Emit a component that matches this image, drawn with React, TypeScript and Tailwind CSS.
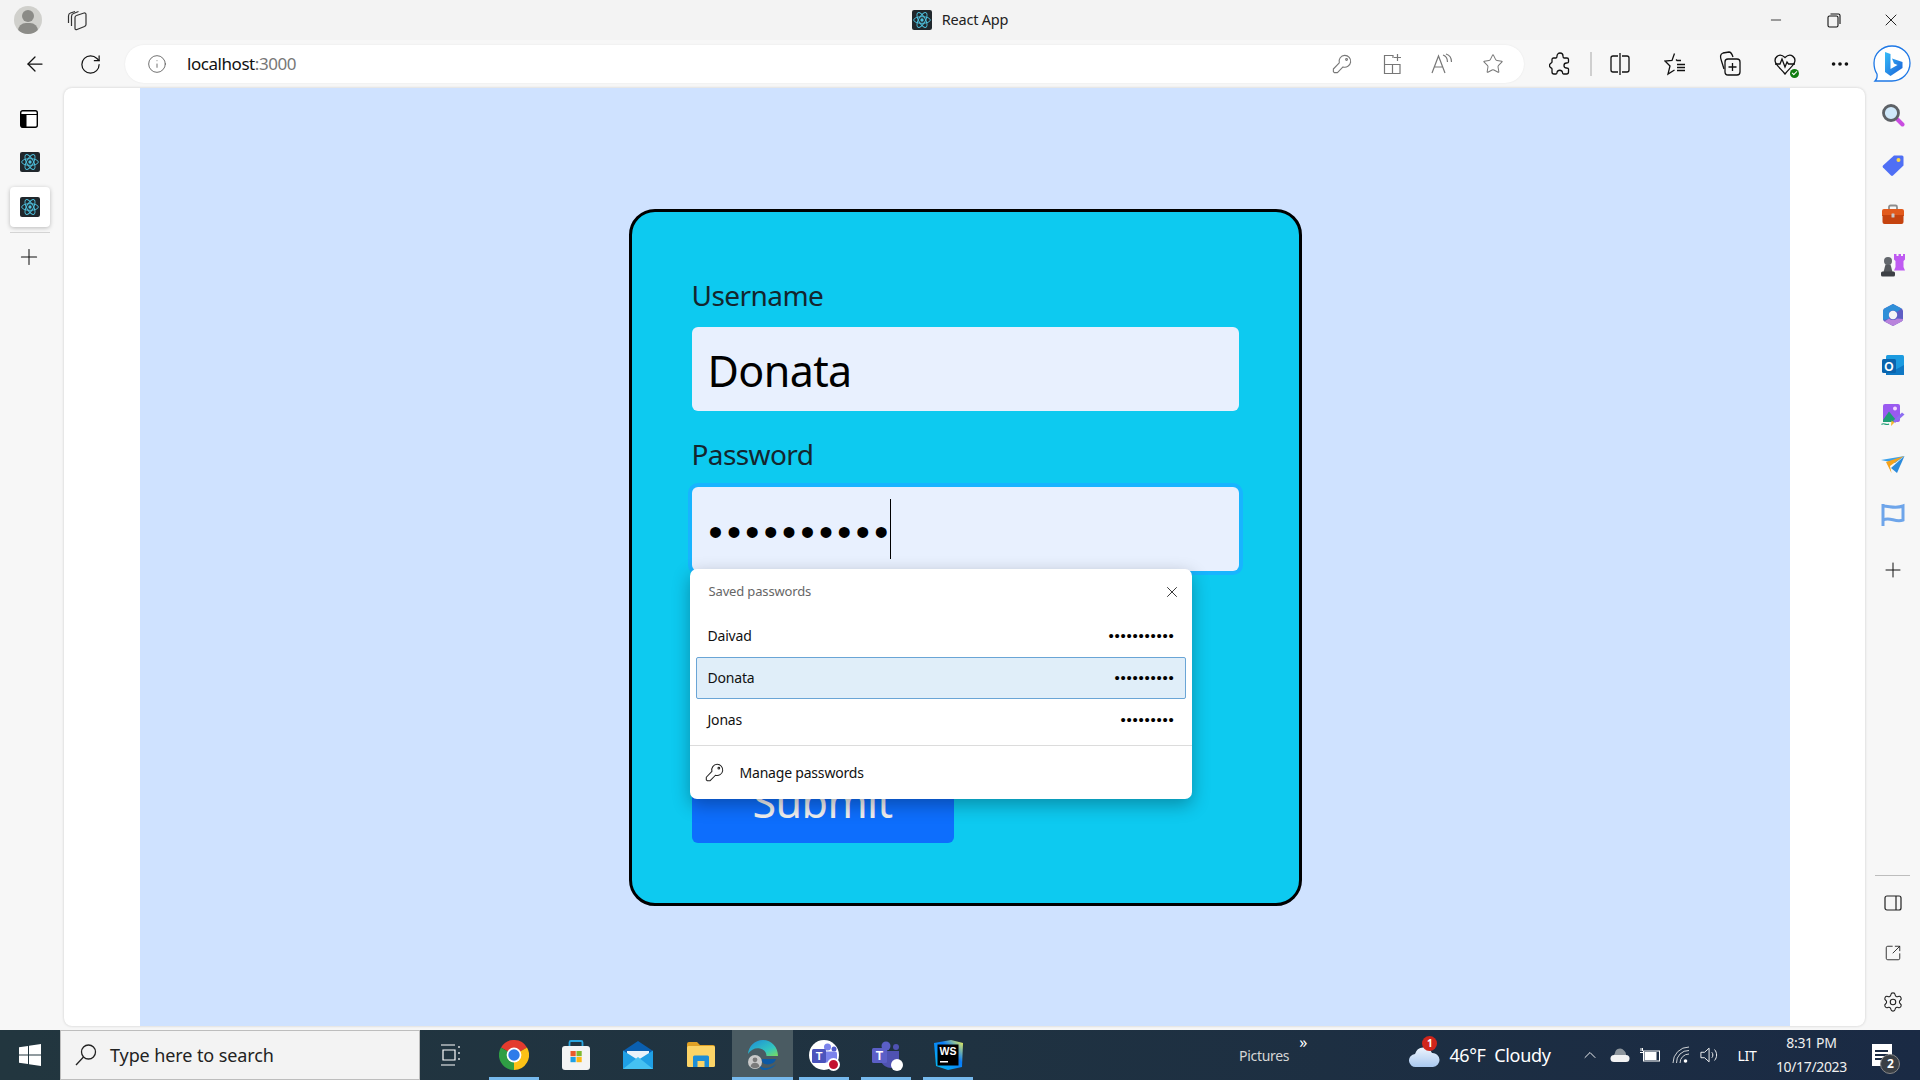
import type { ReactNode } from "react";
import {
  ArrowLeft,
  ChevronUp,
  Ellipsis,
  Info,
  Minus,
  Plus,
  RotateCw,
  Settings,
  SquareArrowOutUpRight,
  Star,
  X,
} from "lucide-react";

const ui = "font-['Noto_Sans','Open_Sans',sans-serif]";

function ReactLogo({ size = 20 }: { size?: number }) {
  return (
    <svg width={size} height={size} viewBox="0 0 24 24">
      <rect width="24" height="24" rx="2.5" fill="#20272c" />
      <g fill="none" stroke="#4fc3e0" strokeWidth="1.1">
        <ellipse cx="12" cy="12" rx="10" ry="4" />
        <ellipse cx="12" cy="12" rx="10" ry="4" transform="rotate(60 12 12)" />
        <ellipse cx="12" cy="12" rx="10" ry="4" transform="rotate(120 12 12)" />
      </g>
      <circle cx="12" cy="12" r="2" fill="#4fc3e0" />
    </svg>
  );
}

function KeyIcon({ color, size = 20 }: { color: string; size?: number }) {
  return (
    <svg width={size} height={size} viewBox="0 0 22 22" fill="none" stroke={color} strokeWidth="1.2" strokeLinejoin="round">
      <path d="M14 1.500a6.500 6.500 0 1 1-1.900 12.700L6 20.500H2.500L1.500 19.500V16.500L8 9.700A6.500 6.500 0 0 1 14 1.500Z" />
      <circle cx="16" cy="6" r="1" />
    </svg>
  );
}

function ChromeIcon() {
  return (
    <svg width="30" height="30" viewBox="0 0 30 30">
      <path d="M15 15L2 7.5A15 15 0 0 1 28 7.5Z" fill="#e33b2e" />
      <path d="M15 15L28 7.5A15 15 0 0 1 15 30Z" fill="#fbc116" />
      <path d="M15 15L15 30A15 15 0 0 1 2 7.5Z" fill="#2f9e44" />
      <circle cx="15" cy="15" r="7.4" fill="#fff" />
      <circle cx="15" cy="15" r="5.7" fill="#2f7bea" />
    </svg>
  );
}

function StoreIcon() {
  return (
    <svg width="30" height="32" viewBox="0 0 30 32">
      <path d="M8.5 9V3.5a1.5 1.5 0 0 1 1.5-1.5h10a1.5 1.5 0 0 1 1.5 1.5V9" fill="none" stroke="#2aa5df" strokeWidth="1.8" />
      <rect x="1" y="7" width="28" height="24" rx="3" fill="#f4f4f4" />
      <rect x="9.5" y="12" width="5.2" height="5.2" fill="#ea5a2c" />
      <rect x="15.5" y="12" width="5.2" height="5.2" fill="#7fb92f" />
      <rect x="9.5" y="18" width="5.2" height="5.2" fill="#1ea0e6" />
      <rect x="15.5" y="18" width="5.2" height="5.2" fill="#fdb813" />
    </svg>
  );
}

function MailIcon() {
  return (
    <svg width="30" height="28" viewBox="0 0 30 28">
      <path d="M0 10L15 0L30 10V12H0Z" fill="#0a5fb0" />
      <path d="M4 10H26V17L15 22L4 17Z" fill="#e9f2fa" />
      <path d="M0 9.5L15 19L30 9.5V28H0Z" fill="#1f9fe5" />
      <path d="M0 28L15 16L30 28Z" fill="#45c1f2" />
    </svg>
  );
}

function FolderIcon() {
  return (
    <svg width="28" height="26" viewBox="0 0 28 26">
      <path d="M0 2a2 2 0 0 1 2-2h8l3 3h13a2 2 0 0 1 2 2v4H0Z" fill="#e0a125" />
      <rect y="4" width="28" height="21" rx="1.5" fill="#fcd467" />
      <path d="M6 25V15a1.5 1.5 0 0 1 1.5-1.5h13A1.5 1.5 0 0 1 22 15v10h-4.5v-6h-7v6Z" fill="#1d8ed8" />
    </svg>
  );
}

function EdgeIcon() {
  return (
    <svg width="30" height="30" viewBox="0 0 30 30">
      <defs>
        <linearGradient id="edgeG" x1="0" y1="0" x2="1" y2="1">
          <stop offset="0" stopColor="#1c8bd8" />
          <stop offset="0.65" stopColor="#33c6c0" />
          <stop offset="1" stopColor="#7edb5a" />
        </linearGradient>
      </defs>
      <path d="M15 0C6.5 0 .5 6.5 0 14c3-5 8-6.5 12-5.5 5 1.2 6.5 4.5 6.5 7.5H30C30 7 23.5 0 15 0Z" fill="url(#edgeG)" />
      <path d="M11 24c2 5 10 5.5 17 0-2.500 3.500-7 6-12 6-2 0-4-.8-5-6Z" fill="#0d5ea8" />
      <path d="M14 19h14c-1 4-7 6.500-11 5-2.500-.9-3.500-3-3-5Z" fill="#0c59a4" />
      <circle cx="7" cy="22" r="7" fill="#c9c9c9" />
      <circle cx="7" cy="19.800" r="2.400" fill="#7a7a7a" />
      <path d="M2.500 26.500c.6-3 2.500-3.800 4.500-3.800s3.900.8 4.500 3.800A7 7 0 0 1 2.500 26.500Z" fill="#7a7a7a" />
    </svg>
  );
}

function TeamsWork() {
  return (
    <div className="relative h-[30px] w-[30px] rounded-full bg-white">
      <svg width="30" height="30" viewBox="0 0 30 30" className="absolute inset-0">
        <circle cx="18.500" cy="7" r="3.500" fill="#7b83eb" />
        <circle cx="25" cy="9" r="2.500" fill="#5059c9" />
        <rect x="14" y="11.500" width="14" height="11" rx="2" fill="#7b83eb" />
        <rect x="3" y="9" width="14" height="14" rx="1.500" fill="#4b53bc" />
        <text x="10" y="20" textAnchor="middle" fontSize="11" fontWeight="700" fill="#fff" fontFamily="Liberation Sans, sans-serif">T</text>
      </svg>
      <span className="absolute right-[-1px] bottom-[-1px] h-[13px] w-[13px] rounded-full border-2 border-white bg-[#c4122f]" />
    </div>
  );
}

function TeamsChat() {
  return (
    <div className="relative h-[30px] w-[30px]">
      <svg width="30" height="30" viewBox="0 0 30 30" className="absolute inset-0">
        <circle cx="15" cy="6" r="4.500" fill="#5b5fc7" />
        <circle cx="25" cy="7" r="3" fill="#4f52b2" />
        <path d="M9 11h19v9c0 5-4 8-8 8s-9-3-11-8Z" fill="#4f52b2" />
        <rect x="1" y="8" width="15" height="15" rx="1.500" fill="#5b5fc7" />
        <text x="8.500" y="20" textAnchor="middle" fontSize="12" fontWeight="700" fill="#fff" fontFamily="Liberation Sans, sans-serif">T</text>
      </svg>
      <span className="absolute right-[-2px] bottom-[-1px] h-[12px] w-[12px] rounded-full bg-white" />
    </div>
  );
}

function WebStormIcon() {
  return (
    <svg width="30" height="30" viewBox="0 0 30 30">
      <defs>
        <linearGradient id="wsG" x1="0" y1="1" x2="1" y2="0">
          <stop offset="0" stopColor="#07c3f2" />
          <stop offset="0.6" stopColor="#087cfa" />
          <stop offset="1" stopColor="#fcf84a" />
        </linearGradient>
      </defs>
      <path d="M1 3L18 0L30 3L29 27L15 30L3 26Z" fill="url(#wsG)" />
      <rect x="4.500" y="4.500" width="21" height="21" fill="#000" />
      <text x="15" y="15" textAnchor="middle" fontSize="10.500" fontWeight="700" fill="#fff" fontFamily="Liberation Sans, sans-serif">WS</text>
      <rect x="7" y="21" width="8" height="1.500" fill="#fff" />
    </svg>
  );
}

function BingIcon() {
  return (
    <svg width="42" height="42" viewBox="0 0 40 40">
      <defs>
        <linearGradient id="bingG" x1="0" y1="0" x2="1" y2="1">
          <stop offset="0" stopColor="#37bdf8" />
          <stop offset="1" stopColor="#1a5fd8" />
        </linearGradient>
      </defs>
      <path d="M20 2C30 2 38 9.500 38 19C38 29 30 37 20 37H3C5 35 5.500 33 5 30C3 27 2 23 2 19C2 9.500 10 2 20 2Z" fill="#fff" stroke="#1e78e6" strokeWidth="1.300" />
      <path d="M13 8L18.500 10V25L25.500 21L22 19.500L20 14.500L30.500 18V24L18.500 32L13 28Z" fill="url(#bingG)" />
    </svg>
  );
}

function SideIcon({ name }: { name: string }) {
  if (name === "search")
    return (
      <svg width="24" height="24" viewBox="0 0 24 24">
        <path d="M15.500 15.500L21.500 21.500" stroke="#c94de0" strokeWidth="4" strokeLinecap="round" />
        <circle cx="10" cy="10" r="7.500" fill="#cfe8fa" stroke="#5d6166" strokeWidth="2.800" />
      </svg>
    );
  if (name === "tag")
    return (
      <svg width="24" height="24" viewBox="0 0 24 24">
        <path d="M13 2.500H21a1.500 1.500 0 0 1 1.500 1.500v8.500L12 22.500a1.500 1.500 0 0 1-2 0L2 14.500a1.500 1.500 0 0 1 0-2Z" fill="#4f6ff5" />
        <circle cx="17.500" cy="7" r="2" fill="#fbd84c" />
      </svg>
    );
  if (name === "toolbox")
    return (
      <svg width="24" height="22" viewBox="0 0 24 22">
        <path d="M8 6V3a1.500 1.500 0 0 1 1.500-1.500h5A1.500 1.500 0 0 1 16 3v3" fill="none" stroke="#8d8d8d" strokeWidth="1.800" />
        <path d="M1 7a2 2 0 0 1 2-2h18a2 2 0 0 1 2 2v5H1Z" fill="#e25a1c" />
        <path d="M1.500 11H22.500V18a2 2 0 0 1-2 2H3.500a2 2 0 0 1-2-2Z" fill="#c5430f" />
        <rect x="10.500" y="9.500" width="3" height="4" rx="0.500" fill="#c9c9c9" />
      </svg>
    );
  if (name === "chess")
    return (
      <svg width="24" height="24" viewBox="0 0 24 24">
        <path d="M13 1H15.500V3H17.500V1H20V3H22V1H24V6.500L22.500 8V14L24 17.500H13L14.500 14V8L13 6.500Z" fill="#bf5af2" />
        <circle cx="7" cy="8" r="4" fill="#63676d" />
        <path d="M4.500 11.500H9.500L11.500 19H2.500Z" fill="#55585d" />
        <rect x="0" y="18.500" width="14" height="5" rx="1.500" fill="#3d4045" />
      </svg>
    );
  if (name === "m365")
    return (
      <svg width="22" height="24" viewBox="0 0 22 24">
        <path d="M11 1L19.500 5.500Q21 6.500 21 8V16Q21 17.500 19.500 18.500L11 23L2.500 18.500Q1 17.500 1 16V8Q1 6.500 2.500 5.500Z" fill="#5f5ec4" />
        <path d="M1 8Q1 6.500 2.500 5.500L11 1L19.500 5.500L15 9A6 6 0 0 0 7 9L7 16L1 17Z" fill="#2f8fd8" />
        <path d="M7 15.500A6 6 0 0 0 15 15.500L21 16Q21 17.500 19.500 18.500L11 23L2.500 18.500Z" fill="#b983dc" />
        <circle cx="11" cy="12" r="4.200" fill="#f6f6f6" />
      </svg>
    );
  if (name === "outlook")
    return (
      <svg width="24" height="24" viewBox="0 0 24 24">
        <rect x="5" y="2" width="18" height="20" rx="1.500" fill="#1c9be0" />
        <path d="M5 12L14 17L23 12V22H5Z" fill="#0f78c4" />
        <rect x="1" y="6" width="14" height="14" rx="1.500" fill="#0a64ad" />
        <text x="8" y="17.500" textAnchor="middle" fontSize="12" fontWeight="700" fill="#fff" fontFamily="Liberation Sans, sans-serif">O</text>
      </svg>
    );
  if (name === "image")
    return (
      <svg width="24" height="24" viewBox="0 0 24 24">
        <rect x="2" y="1" width="17" height="18" rx="2" fill="#9a5af0" />
        <circle cx="14" cy="5.500" r="2" fill="#f4d8ff" />
        <path d="M2 17L8 8.500L15 17V19H2Z" fill="#1f9e75" />
        <path d="M12 18L21 9.500L23.500 11.500L14 20Z" fill="#8d6df2" />
        <path d="M10.500 17.500L13.500 19.500L10 23Z" fill="#f5b82e" />
        <path d="M0.500 21.500C3 19 5 23 8 21" stroke="#1f9e75" strokeWidth="1.200" fill="none" />
      </svg>
    );
  if (name === "plane")
    return (
      <svg width="24" height="20" viewBox="0 0 24 20">
        <path d="M0 5L23.500 1L14 8Z" fill="#3aa0ea" />
        <path d="M23.500 1L16 18L10 13Z" fill="#2b8bdc" />
        <path d="M5 7L23 1L9 11L10.500 18Z" fill="#f5a31c" />
      </svg>
    );
  return (
    <svg width="24" height="24" viewBox="0 0 24 24" fill="none" stroke="#6ea5ea" strokeWidth="3">
      <path d="M2 1V23" />
      <path d="M2 3C9 3 14 6 22 3V17C14 20 9 13 2 17" />
    </svg>
  );
}

function Slot({ className, children }: { className?: string; children: ReactNode }) {
  return <div className={`flex shrink-0 items-center justify-center ${className ?? ""}`}>{children}</div>;
}

function TitleBar() {
  return (
    <div className="grid h-10 grid-cols-[1fr_auto_1fr] items-center bg-[#f3f3f3]">
      <div className="flex items-center pl-[14px]">
        <div className="relative h-[28px] w-[28px] overflow-hidden rounded-full bg-[#d0d0cc]">
          <span className="absolute top-[4px] left-[8px] h-[12px] w-[12px] rounded-full bg-[#8b8b87]" />
          <span className="absolute top-[17px] left-[4px] h-[16px] w-[20px] rounded-full bg-[#8b8b87]" />
        </div>
        <svg className="ml-[24px]" width="22" height="22" viewBox="0 0 22 22" fill="none" stroke="#333" strokeWidth="1.200">
          <path d="M2.500 14V7C2.500 5.500 3 4.500 4.500 4L9 2.500" />
          <path d="M5.500 17V7.500C5.500 6 6 5 7.500 4.500L12.500 2.500" />
          <path d="M9 19.500V8.500C9 7.500 9.500 6.800 10.500 6.500L18 4C19 3.800 20 4.500 20 5.500V15.500C20 16.500 19.500 17 18.500 17.500L11 20.500C10 21 9 20.500 9 19.500Z" />
        </svg>
      </div>
      <div className="flex items-center gap-[10px]">
        <ReactLogo />
        <span className={`text-[14.5px] tracking-[-0.2px] text-[#222] ${ui}`}>React App</span>
      </div>
      <div className="flex justify-end">
        <Slot className="w-[58px]"><Minus size={16} strokeWidth={1.2} color="#111" /></Slot>
        <Slot className="w-[57px]">
          <svg width="14" height="15" viewBox="0 0 14 15" fill="none" stroke="#111" strokeWidth="1.100">
            <rect x="1" y="3" width="10" height="11" rx="1.500" />
            <path d="M3.500 1H11.500a1.500 1.500 0 0 1 1.500 1.500V11" />
          </svg>
        </Slot>
        <Slot className="w-[58px]"><X size={20} strokeWidth={1.1} color="#111" /></Slot>
      </div>
    </div>
  );
}

function ToolBar() {
  const gray = "#777";
  return (
    <div className="flex h-12 items-center bg-[#f7f7f7] pl-[15px]">
      <Slot className="w-10"><ArrowLeft size={24} strokeWidth={1.25} color="#111" /></Slot>
      <Slot className="ml-[15px] w-10"><RotateCw size={23} strokeWidth={1.25} color="#111" /></Slot>
      <div className="ml-[15px] flex h-[38px] w-[1399px] shrink-0 items-center rounded-full bg-white pr-[7px] pl-[22px] shadow-[0_0_2px_rgba(0,0,0,0.08)]">
        <Slot className="w-5"><Info size={20} strokeWidth={1} color="#555" /></Slot>
        <span className={`ml-5 text-[17px] tracking-[-0.45px] text-[#111] ${ui}`}>
          localhost<span className="text-[#777]">:3000</span>
        </span>
        <div className="ml-auto flex">
          <Slot className="w-[50px]"><KeyIcon color={gray} /></Slot>
          <Slot className="w-[50px]">
            <svg width="20" height="22" viewBox="0 0 20 22" fill="none" stroke={gray} strokeWidth="1.200">
              <path d="M11 5V2.500H2.500V20.500H18V11.500H2.500M10.500 11.500V20.500" />
              <path d="M15.500 1V8M12 4.500H19" />
            </svg>
          </Slot>
          <Slot className="w-[50px]">
            <svg width="22" height="22" viewBox="0 0 22 22" fill="none" stroke={gray} strokeWidth="1.200">
              <path d="M1 20L7.500 3L14 20M3.500 14H11.500" />
              <path d="M12 2C15 3 16.500 6 16.500 9M15 1C18.500 2 20.500 5.500 20.500 9" />
            </svg>
          </Slot>
          <Slot className="w-[50px] pl-[1px]"><Star size={22} strokeWidth={1.1} color={gray} /></Slot>
        </div>
      </div>
      <Slot className="ml-[16px] w-10">
        <svg width="22" height="24" viewBox="0 0 22 24" fill="none" stroke="#111" strokeWidth="1.300">
          <path d="M8 4a3 3 0 0 1 6 0c0 1 0 2 1 2h3a1.500 1.500 0 0 1 1.500 1.500V10c0 1-1 1-2 1a2.500 2.500 0 0 0 0 5c1 0 2 0 2 1v3a2 2 0 0 1-2 2h-3c-1 0-1-1-1-1.500a2.800 2.800 0 0 0-5.500 0c0 .5 0 1.500-1 1.500H5a2 2 0 0 1-2-2v-3c0-1-1-1-1.500-1.500a2.500 2.500 0 0 1 0-4C2 10.500 3 11 3 10V7.500A1.500 1.500 0 0 1 4.500 6H7c1 0 1-1 1-2Z" />
        </svg>
      </Slot>
      <div className="ml-[10px] h-[24px] w-[2px] shrink-0 bg-[#cfcfcf]" />
      <Slot className="ml-[8px] w-10">
        <svg width="20" height="24" viewBox="0 0 20 24" fill="none" stroke="#111" strokeWidth="1.300">
          <path d="M8 4H3a2 2 0 0 0-2 2v12a2 2 0 0 0 2 2h5M12 4h5a2 2 0 0 1 2 2v12a2 2 0 0 1-2 2h-5M10 1V23" />
        </svg>
      </Slot>
      <Slot className="ml-[15px] w-10">
        <svg width="22" height="24" viewBox="0 0 22 24" fill="none" stroke="#111" strokeWidth="1.300">
          <path d="M10.500 1.500L8 8.500L1 9L6 14L4 22L10.500 18M12 7.500L13 8.500H17" />
          <path d="M13 12.500H21M13 15.500H21M13 18.500H21" />
        </svg>
      </Slot>
      <Slot className="ml-[15px] w-10">
        <svg width="22" height="26" viewBox="0 0 22 26" fill="none" stroke="#111" strokeWidth="1.300">
          <path d="M5 18L2.500 10C1 6 1 3 4 2L10 1C12 1 13 3 14 6" />
          <rect x="6" y="8" width="15" height="16" rx="3" />
          <path d="M13.500 12V20M9.500 16H17.500" />
        </svg>
      </Slot>
      <Slot className="ml-[15px] w-10">
        <div className="relative">
          <svg width="22" height="22" viewBox="0 0 22 22" fill="none" stroke="#111" strokeWidth="1.300">
            <path d="M2 10.500C-1 5 5-1 11 4.500C17-1 23 5 20 10.500C18 14 14 17 11 21C8 17 4 14 2 10.500Z" />
            <path d="M1 11H6L8 6L11 14L13 9L14.500 11H21" />
          </svg>
          <span className="absolute right-[-3px] bottom-[-3px] flex h-[9px] w-[9px] items-center justify-center rounded-full bg-[#107c10]">
            <span className="h-[3px] w-[5px] -translate-y-[1px] -rotate-45 border-b border-l border-white" />
          </span>
        </div>
      </Slot>
      <Slot className="ml-[15px] w-10"><Ellipsis size={22} strokeWidth={2} color="#111" /></Slot>
      <Slot className="ml-[12px] w-10"><BingIcon /></Slot>
    </div>
  );
}

function LeftRail() {
  return (
    <aside className="flex w-16 shrink-0 flex-col pl-[10px]">
      <Slot className="mt-[11px] h-10 w-10 pr-[2px]">
        <svg width="18" height="18" viewBox="0 0 18 18">
          <rect x="0.700" y="0.700" width="16.600" height="16.600" rx="2" fill="#fff" stroke="#000" strokeWidth="1.400" />
          <path d="M1 4.500H17" stroke="#000" strokeWidth="1" />
          <rect x="1" y="4.500" width="5.500" height="12.800" fill="#000" />
        </svg>
      </Slot>
      <Slot className="mt-[3px] h-10 w-10"><ReactLogo /></Slot>
      <Slot className="mt-[5px] h-10 w-10 rounded-[4px] bg-white shadow-[0_1px_4px_rgba(0,0,0,0.25)]"><ReactLogo /></Slot>
      <div className="mt-[5px] h-px w-10 bg-[#d4d4d4]" />
      <Slot className="mt-[4px] h-10 w-10 pr-[2px]"><Plus size={26} strokeWidth={0.95} color="#111" /></Slot>
    </aside>
  );
}

function RightRail() {
  const apps = ["search", "tag", "toolbox", "chess", "m365", "outlook", "image", "plane", "flag"];
  return (
    <aside className="flex w-[55px] shrink-0 flex-col items-center pt-[2px]">
      {apps.map((a) => (
        <Slot key={a} className="h-[50px]"><SideIcon name={a} /></Slot>
      ))}
      <Slot className="mt-[5px] h-[50px]"><Plus size={24} strokeWidth={1} color="#111" /></Slot>
      <div className="mt-auto h-px w-[35px] bg-[#bdbdbd]" />
      <Slot className="mt-[2px] h-[50px]">
        <svg width="18" height="18" viewBox="0 0 18 18" fill="none" stroke="#222" strokeWidth="1.200">
          <rect x="1" y="2" width="16" height="14" rx="2" />
          <path d="M12 2V16" />
        </svg>
      </Slot>
      <Slot className="h-[50px]"><SquareArrowOutUpRight size={18} strokeWidth={1.2} color="#222" /></Slot>
      <Slot className="h-[48px]"><Settings size={22} strokeWidth={1.2} color="#222" /></Slot>
    </aside>
  );
}

function SavedRow({ name, mask, active }: { name: string; mask: string; active?: boolean }) {
  return (
    <div
      className={`mx-[6px] flex h-[42px] items-center justify-between border pr-[10px] pl-[11px] ${
        active ? "rounded-[2px] border-[#6aa5d6] bg-[#e0eef9]" : "border-transparent"
      }`}
    >
      <span className="text-[14px] tracking-[-0.2px] text-[#111]">{name}</span>
      <span className="font-['Liberation_Sans',sans-serif] text-[15px] leading-none tracking-[0.75px] text-black">{mask}</span>
    </div>
  );
}

function SavedPasswords() {
  return (
    <div className={`absolute top-[82px] left-[-2px] z-10 h-[230px] w-[502px] rounded-[7px] bg-white shadow-[0_6px_18px_rgba(0,0,0,0.3)] ${ui}`}>
      <div className="flex h-[46px] items-center justify-between pr-[11px] pl-[19px]">
        <span className="pt-[1px] text-[13px] tracking-[-0.15px] text-[#666]">Saved passwords</span>
        <X size={18} strokeWidth={1.2} color="#222" />
      </div>
      <SavedRow name="Daivad" mask="•••••••••••" />
      <SavedRow name="Donata" mask="••••••••••" active />
      <SavedRow name="Jonas" mask="•••••••••" />
      <div className="mt-[4px] h-px bg-[#dcdcdc]" />
      <div className="flex h-[54px] items-center pl-[15px]">
        <KeyIcon color="#222" size={19} />
        <span className="ml-[16px] text-[14px] tracking-[-0.2px] text-[#111]">Manage passwords</span>
      </div>
    </div>
  );
}

function LoginCard() {
  return (
    <form className={`h-[697px] w-[673px] rounded-[26px] border-[3px] border-black bg-[#0dcaf0] px-[60px] pt-[63px] ${ui}`}>
      <label className="mb-3 block h-10 text-[28px] leading-10 tracking-[-0.55px] text-[#14262e]">Username</label>
      <input
        readOnly
        value="Donata"
        className="block h-[84px] w-[547px] rounded-[6px] bg-[#e8f0fe] px-4 pt-1 text-[43px] tracking-[-0.6px] text-black outline-none"
      />
      <label className="mt-[23px] mb-[13px] block h-10 text-[28px] leading-10 tracking-[-0.6px] text-[#14262e]">Password</label>
      <div className="relative h-[84px] w-[547px]">
        <div className="flex h-full items-center rounded-[6px] bg-[#e8f0fe] pl-[17px] ring-4 ring-[#18b4ff]">
          <span className="pt-[6px] font-['Liberation_Sans',sans-serif] text-[40px] leading-none tracking-[4.4px] text-black">••••••••••</span>
          <span className="ml-[-3px] h-[60px] w-px bg-black" />
        </div>
        <SavedPasswords />
      </div>
      <button
        type="button"
        className="mt-[188px] block h-[84px] w-[262px] rounded-[6px] bg-[#0d6efd] pt-[3px] text-center text-[43px] tracking-[-0.6px] text-[#f0f0f0]"
      >
        Submit
      </button>
    </form>
  );
}

function TaskApp({ w, active, running, children }: { w: string; active?: boolean; running?: boolean; children: ReactNode }) {
  return (
    <div className={`relative flex h-full shrink-0 items-center justify-center ${w} ${active ? "bg-[#4a5b62]" : ""}`}>
      {children}
      {running && <span className={`absolute bottom-0 h-[3px] bg-[#76b9ed] ${active ? "inset-x-0" : "inset-x-[6px]"}`} />}
    </div>
  );
}

function TaskBar() {
  return (
    <div className={`flex h-[50px] items-center bg-linear-to-r from-[#22363f] via-[#1f3241] to-[#1a2a44] text-white ${ui}`}>
      <Slot className="w-[60px]">
        <svg width="22" height="22" viewBox="0 0 22 22" fill="#fff">
          <path d="M0 3.200L9 2V10.500H0ZM10 1.800L22 0V10.500H10ZM0 11.500H9V20L0 18.800ZM10 11.500H22V22L10 20.200Z" />
        </svg>
      </Slot>
      <div className="flex h-full w-[360px] shrink-0 items-center border border-[#bdbdbd] bg-[#f3f3f3] pl-[13px]">
        <svg width="24" height="24" viewBox="0 0 24 24" fill="none" stroke="#222" strokeWidth="1.300">
          <circle cx="14.500" cy="9" r="7" />
          <path d="M9.500 14L2 22" />
        </svg>
        <span className="ml-[12px] text-[18px] tracking-[-0.1px] text-[#222]">Type here to search</span>
      </div>
      <Slot className="w-[63px] pr-[2px]">
        <svg width="20" height="24" viewBox="0 0 20 24" fill="none" stroke="#fff" strokeWidth="1.200">
          <path d="M0 2H14M0 22H14M2 7H14V17H2ZM18 3V5M18 9V11M18 15V17" />
        </svg>
      </Slot>
      <TaskApp w="w-[62px]" running><ChromeIcon /></TaskApp>
      <TaskApp w="w-[62px]"><StoreIcon /></TaskApp>
      <TaskApp w="w-[62px]"><MailIcon /></TaskApp>
      <TaskApp w="w-[63px]"><FolderIcon /></TaskApp>
      <TaskApp w="w-[61px]" active running><EdgeIcon /></TaskApp>
      <TaskApp w="w-[62px]" running><TeamsWork /></TaskApp>
      <TaskApp w="w-[62px]" running><TeamsChat /></TaskApp>
      <TaskApp w="w-[62px]" running><WebStormIcon /></TaskApp>

      <span className="ml-[260px] text-[14px] tracking-[-0.3px] text-[#d6d6d6]">Pictures</span>
      <span className="mb-[26px] ml-[10px] text-[16px] leading-none text-white">»</span>

      <div className="relative ml-[102px] h-[26px] w-[31px]">
        <svg width="31" height="24" viewBox="0 0 31 24" className="absolute bottom-0">
          <defs>
            <linearGradient id="cloudG" x1="0" y1="0" x2="0" y2="1">
              <stop offset="0" stopColor="#eef5fd" />
              <stop offset="1" stopColor="#a8c8f0" />
            </linearGradient>
          </defs>
          <path d="M7 23a6.500 6.500 0 0 1-1-13a9 9 0 0 1 17-1a7 7 0 0 1 1 14Z" fill="url(#cloudG)" />
        </svg>
        <span className="absolute top-[-6px] left-[13px] flex h-[15px] w-[15px] items-center justify-center rounded-full bg-[#d0261c] text-[10px] font-bold text-white">1</span>
      </div>
      <span className="ml-[9px] text-[18px] tracking-[-0.35px] whitespace-pre text-white">46°F  Cloudy</span>

      <Slot className="ml-[30px] w-5"><ChevronUp size={24} strokeWidth={1.1} color="#fff" /></Slot>
      <Slot className="ml-[10px] w-5">
        <svg width="20" height="14" viewBox="0 0 20 14">
          <path d="M5 5a5 5 0 0 1 9-2.500A5 5 0 0 1 16 7H4Z" fill="#8d959c" />
          <path d="M4 14a3.500 3.500 0 0 1 0-7h12a3.500 3.500 0 0 1 0 7Z" fill="#f2f2f2" />
        </svg>
      </Slot>
      <Slot className="ml-[10px] w-5">
        <svg width="20" height="14" viewBox="0 0 20 14" fill="none" stroke="#fff" strokeWidth="1">
          <rect x="3.500" y="3" width="16" height="10" />
          <rect x="4.500" y="4" width="12" height="8" fill="#fff" stroke="none" />
          <path d="M0 4.500H3M1 0V3M2.500 0V3" />
        </svg>
      </Slot>
      <Slot className="ml-[11px] w-5">
        <svg width="18" height="18" viewBox="0 0 18 18" fill="none" stroke="#cfd3d6" strokeWidth="1">
          <path d="M1 17A16 16 0 0 1 17 1M4.500 17A12 12 0 0 1 17 4.500M8 17A9 9 0 0 1 17 8" />
          <circle cx="13.500" cy="15" r="1.800" fill="#fff" stroke="none" />
        </svg>
      </Slot>
      <Slot className="ml-[9px] w-5">
        <svg width="22" height="20" viewBox="0 0 22 20" fill="none" stroke="#fff" strokeWidth="1">
          <path d="M1 7H5L10 2.500V17.500L5 13H1Z" />
          <path d="M13 7C14.500 8.500 14.500 11.500 13 13M16 4C19 7.500 19 12.500 16 16" />
        </svg>
      </Slot>
      <span className="ml-[17px] text-[14px] tracking-[-0.3px] text-white">LIT</span>
      <div className="ml-[17px] flex w-[76px] flex-col items-center text-[14px] leading-[24px] tracking-[-0.35px] text-[#f0f0f0]">
        <span>8:31 PM</span>
        <span>10/17/2023</span>
      </div>
      <div className="relative ml-[23px] h-[22px] w-[20px] bg-white">
        <span className="absolute top-[6px] left-[3px] h-[2px] w-[13px] bg-[#1a2a44]" />
        <span className="absolute top-[10px] left-[3px] h-[2px] w-[13px] bg-[#1a2a44]" />
        <span className="absolute top-[14px] left-[3px] h-[2px] w-[9px] bg-[#1a2a44]" />
        <span className="absolute top-[10px] left-[8px] flex h-[20px] w-[20px] items-center justify-center rounded-full border border-[#888] bg-[#3a3f45] text-[12px] font-bold text-white">2</span>
      </div>
    </div>
  );
}

export default function App() {
  return (
    <div className="flex h-[1080px] w-[1920px] flex-col overflow-hidden bg-[#f7f7f7]">
      <TitleBar />
      <ToolBar />
      <div className="flex h-[938px] shrink-0">
        <LeftRail />
        <main className="flex w-[1801px] shrink-0 overflow-hidden rounded-[8px] bg-white pr-[75px] pl-[76px] shadow-[0_0_3px_rgba(0,0,0,0.18)]">
          <div className="flex flex-1 items-center justify-center bg-[#cfe2ff]">
            <LoginCard />
          </div>
        </main>
        <RightRail />
      </div>
      <div className="h-1 shrink-0" />
      <TaskBar />
    </div>
  );
}
